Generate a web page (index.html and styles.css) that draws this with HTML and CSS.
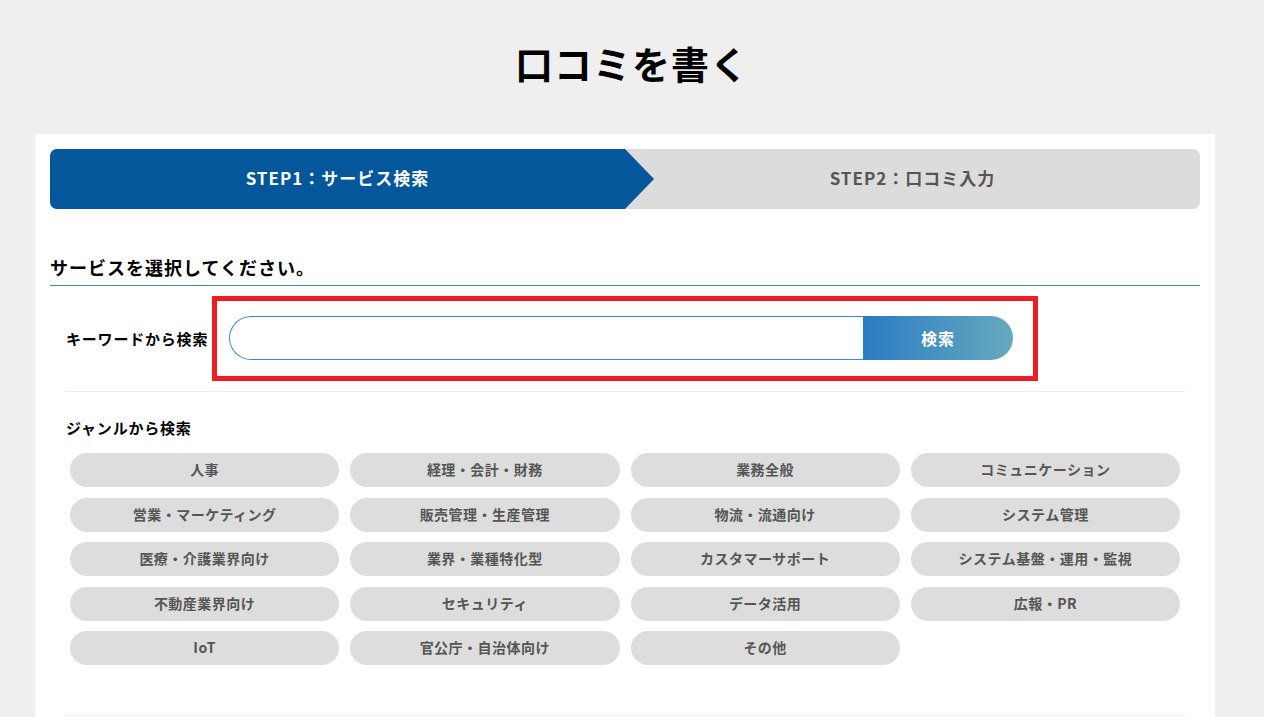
FILE: index.html
```html
<!DOCTYPE html>
<html lang="ja">
<head>
<meta charset="UTF-8" />
<meta name="viewport" content="width=device-width, initial-scale=1" />
<title>口コミを書く</title>
<link rel="stylesheet" href="styles.css">
</head>
<body>
  <h1 class="page-title">口コミを書く</h1>

  <div class="card">
    <div class="steps">
      <div class="step step-current">STEP1：サービス検索</div>
      <div class="step">STEP2：口コミ入力</div>
    </div>

    <h2 class="section-title">サービスを選択してください。</h2>

    <div class="search-block">
      <div class="search-label">キーワードから検索</div>
      <div class="search-box">
        <input type="text" class="search-input" />
        <button class="search-btn">検索</button>
      </div>
    </div>

    <div class="genre-block">
      <div class="genre-label">ジャンルから検索</div>
      <ul class="genre-list">
        <li><a href="#">人事</a></li>
        <li><a href="#">経理・会計・財務</a></li>
        <li><a href="#">業務全般</a></li>
        <li><a href="#">コミュニケーション</a></li>
        <li><a href="#">営業・マーケティング</a></li>
        <li><a href="#">販売管理・生産管理</a></li>
        <li><a href="#">物流・流通向け</a></li>
        <li><a href="#">システム管理</a></li>
        <li><a href="#">医療・介護業界向け</a></li>
        <li><a href="#">業界・業種特化型</a></li>
        <li><a href="#">カスタマーサポート</a></li>
        <li><a href="#">システム基盤・運用・監視</a></li>
        <li><a href="#">不動産業界向け</a></li>
        <li><a href="#">セキュリティ</a></li>
        <li><a href="#">データ活用</a></li>
        <li><a href="#">広報・PR</a></li>
        <li><a href="#">IoT</a></li>
        <li><a href="#">官公庁・自治体向け</a></li>
        <li><a href="#">その他</a></li>
      </ul>
    </div>
  </div>
</body>
</html>
```

FILE: styles.css
```css
html, body {
  overflow: hidden;
}
body {
  font-family: "Noto Sans CJK JP", "Noto Sans", sans-serif;
  background: #efefef;
  color: #000;
  margin: 0;
}
.page-title {
  margin: 0;
  padding-top: 40px;
  height: 94px;
  box-sizing: border-box;
  font-size: 38px;
  line-height: 46px;
  font-weight: 700;
  letter-spacing: 1px;
  text-align: center;
}
.card {
  background: #fff;
  width: 1180px;
  margin-left: 35px;
  margin-top: 40px;
  padding: 15px 15px 2px;
  box-sizing: border-box;
}
.steps {
  display: flex;
  height: 60px;
  border-radius: 7px;
  overflow: hidden;
  background: #dcdcdc;
}
.step {
  flex: 1;
  display: flex;
  align-items: center;
  justify-content: center;
  padding-bottom: 4px;
  box-sizing: border-box;
  font-size: 17px;
  font-weight: 700;
  letter-spacing: 1px;
  color: #555;
}
.step-current {
  flex: 0 0 604px;
  padding-right: 29px;
  background: #04579a;
  color: #fff;
  position: relative;
  z-index: 1;
  clip-path: polygon(0 0, 575px 0, 100% 50%, 575px 100%, 0 100%);
}
.step-current + .step {
  margin-left: -29px;
}
.section-title {
  margin: 47px 0 0;
  padding-bottom: 7px;
  border-bottom: 1px solid #4d80ab;
  font-size: 18px;
  line-height: 22px;
  font-weight: 700;
  letter-spacing: 1px;
}
.search-block {
  margin: 0 15px;
  padding: 10px 0;
  border-bottom: 1px solid #eee;
  display: flex;
  align-items: center;
}
.search-label {
  width: 147px;
  padding-left: 1px;
  box-sizing: border-box;
  font-size: 15px;
  font-weight: 700;
  letter-spacing: 0.8px;
}
.search-box {
  display: flex;
  border: 5px solid #ee1c25;
  padding: 15px 20px 16px 12px;
}
.search-input {
  width: 634px;
  height: 44px;
  box-sizing: border-box;
  border: 1px solid #3d8cc5;
  border-right: none;
  border-radius: 22px 0 0 22px;
  outline: none;
  padding: 0 18px;
  font-size: 15px;
}
.search-btn {
  width: 150px;
  height: 44px;
  border: none;
  border-radius: 0 22px 22px 0;
  background: linear-gradient(90deg, #2c7bc3, #65aabd);
  color: #fff;
  font-family: inherit;
  font-size: 16px;
  font-weight: 700;
  letter-spacing: 1px;
  cursor: pointer;
}
.genre-block {
  margin: 0 15px;
  padding: 26px 0 50px;
  border-bottom: 1px solid #eee;
}
.genre-label {
  font-size: 15px;
  line-height: 20px;
  font-weight: 700;
  letter-spacing: 0.8px;
  padding-left: 1px;
  margin-bottom: 15px;
}
.genre-list {
  list-style: none;
  margin: 0;
  padding: 0 5px;
  display: grid;
  grid-template-columns: repeat(4, 1fr);
  gap: 10.5px 11px;
}
.genre-list li a {
  display: flex;
  align-items: center;
  justify-content: center;
  height: 34px;
  padding-bottom: 2px;
  box-sizing: border-box;
  border-radius: 17px;
  background: #dddddd;
  color: #555;
  text-decoration: none;
  font-size: 14px;
  font-weight: 700;
  letter-spacing: 0.5px;
}
.genre-list li a:hover {
  background: #d0d0d0;
}
```
